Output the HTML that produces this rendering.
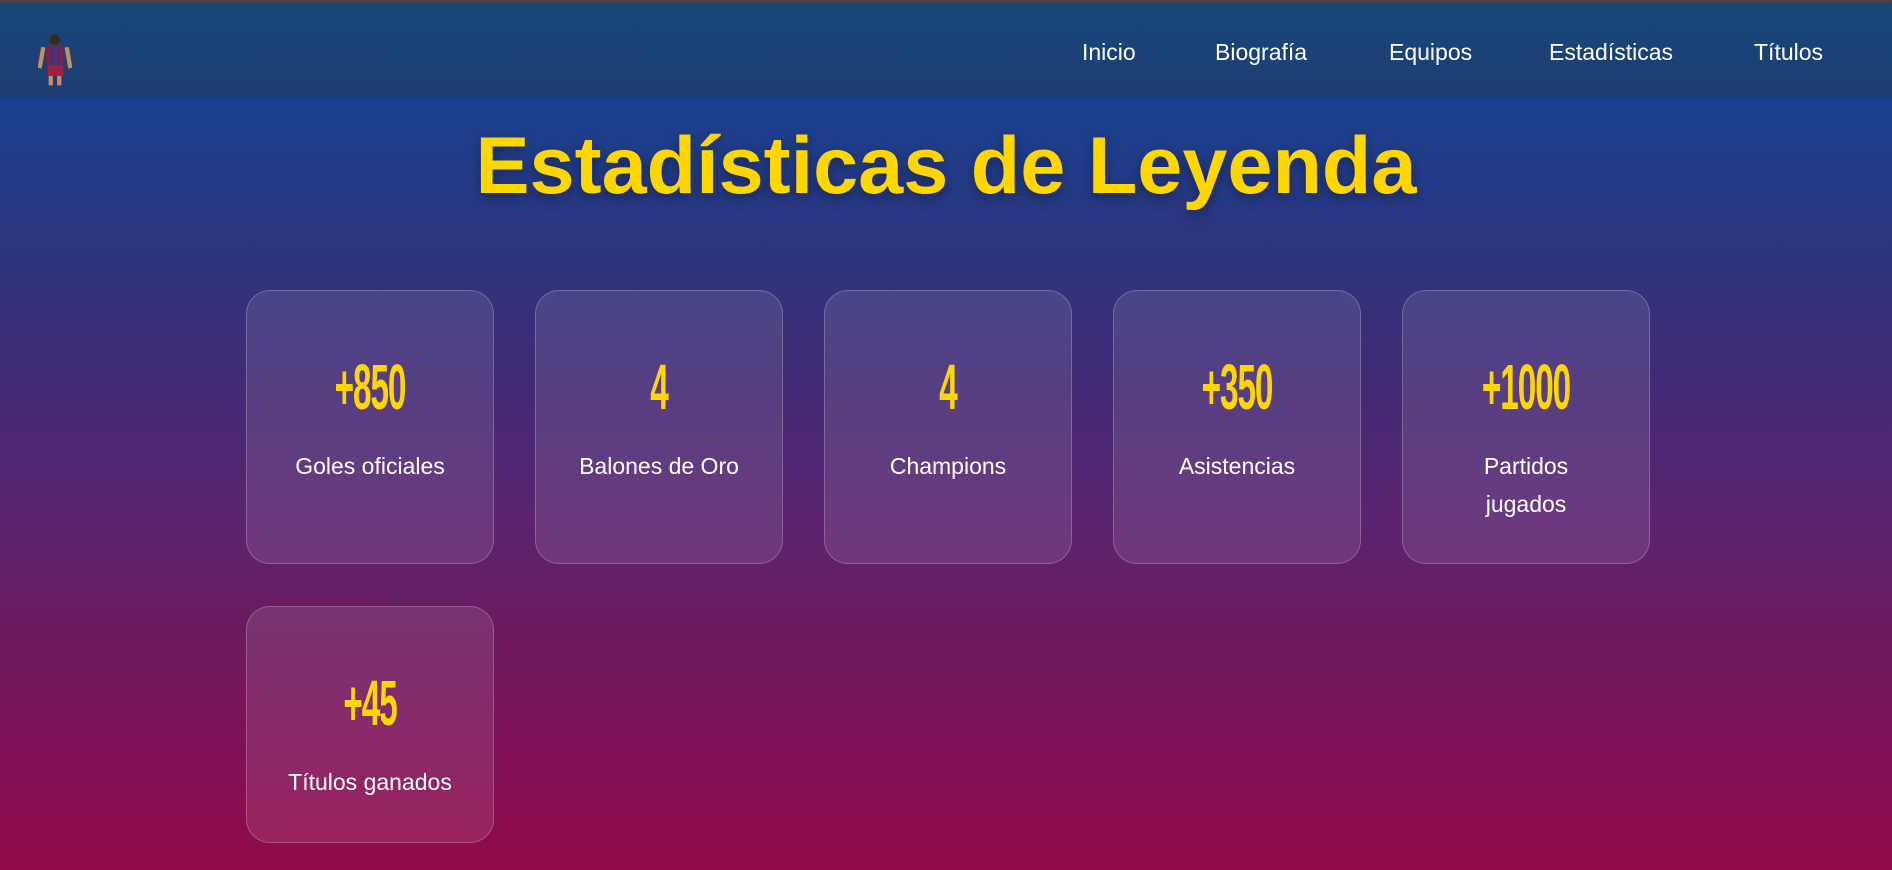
<!DOCTYPE html>
<html><head><meta charset="utf-8"><style>
*{margin:0;padding:0;box-sizing:border-box}
html,body{width:1892px;height:870px;overflow:hidden}
body{font-family:"Liberation Sans",sans-serif;background:linear-gradient(180deg,#17418e 0px,#1a4190 100px,#2c357e 250px,#422a74 380px,#5b2370 520px,#6a1b60 620px,#7e1158 740px,#920a4a 870px);position:relative}
.top{position:absolute;left:0;top:0;width:1892px;height:3px;background:#444}
nav{position:absolute;left:0;top:3px;width:1892px;height:95px;background:linear-gradient(180deg,#17477a,#1e3d72)}
nav a{position:absolute;top:36px;color:#fff;font-size:23px;text-decoration:none}
.logo{position:absolute;left:38px;top:30px;width:34px;height:56px}
h1{position:absolute;left:0;width:1892px;top:120px;text-align:center;color:#ffd700;font-size:81px;font-weight:bold;text-shadow:0 4px 12px rgba(0,0,0,.35)}
.card{position:absolute;width:248px;border:1px solid rgba(255,255,255,.22);border-radius:24px;background:rgba(255,255,255,.1);text-align:center;color:#fff}
.num{position:absolute;left:0;width:100%;top:64px;color:#ffd700;font-size:64px;font-weight:bold;line-height:64px;transform:scaleX(.52);letter-spacing:-2px}
.lbl{position:absolute;left:20px;right:20px;top:156px;font-size:23px;line-height:38px;font-weight:normal}
</style></head><body>
<div class="top"></div>
<nav>
<svg class="logo" viewBox="0 0 32 52"><circle cx="16" cy="6" r="5" fill="#3a2a1e"/><rect x="8" y="11" width="16" height="20" rx="3" fill="#8a1d3a"/><rect x="12" y="12" width="4" height="19" fill="#2a3a8a"/><rect x="18" y="12" width="3" height="19" fill="#2a3a8a"/><rect x="3" y="13" width="4" height="20" fill="#c98b6a" transform="rotate(10 5 13)"/><rect x="25" y="13" width="4" height="20" fill="#c98b6a" transform="rotate(-10 27 13)"/><rect x="9" y="30" width="15" height="10" fill="#a02040"/><rect x="10" y="40" width="4" height="9" fill="#c98b6a"/><rect x="18" y="40" width="4" height="9" fill="#c98b6a"/></svg>
<a style="left:1082px">Inicio</a>
<a style="left:1215px">Biografía</a>
<a style="left:1389px">Equipos</a>
<a style="left:1549px">Estadísticas</a>
<a style="left:1754px">Títulos</a>
</nav>
<h1>Estadísticas de Leyenda</h1>
<div class="card" style="left:246px;top:290px;height:274px"><div class="num">+850</div><div class="lbl">Goles oficiales</div></div>
<div class="card" style="left:535px;top:290px;height:274px"><div class="num">4</div><div class="lbl">Balones de Oro</div></div>
<div class="card" style="left:824px;top:290px;height:274px"><div class="num">4</div><div class="lbl">Champions</div></div>
<div class="card" style="left:1113px;top:290px;height:274px"><div class="num">+350</div><div class="lbl">Asistencias</div></div>
<div class="card" style="left:1402px;top:290px;height:274px"><div class="num">+1000</div><div class="lbl">Partidos<br>jugados</div></div>
<div class="card" style="left:246px;top:606px;height:237px"><div class="num">+45</div><div class="lbl">Títulos ganados</div></div>
</body></html>
